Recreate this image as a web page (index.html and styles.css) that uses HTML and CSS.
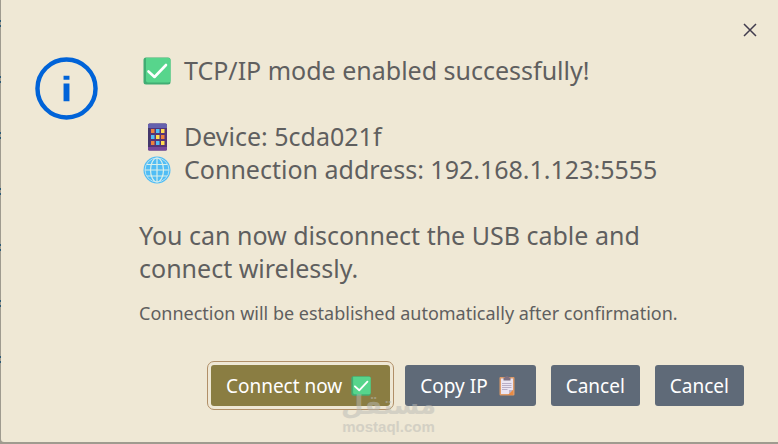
FILE: index.html
```html
<!DOCTYPE html>
<html lang="en">
<head>
<meta charset="utf-8">
<meta name="viewport" content="width=device-width, initial-scale=1">
<title>TCP/IP mode</title>
<link rel="stylesheet" href="styles.css">
</head>
<body>
<svg class="defs" aria-hidden="true">
  <symbol id="check" viewBox="0 0 28 28">
    <rect x="0.5" y="0.5" width="27" height="27" rx="2.5" fill="#41ad73"/>
    <path d="M3 1h22.500a2 2 0 0 1 2 2v20.500a2 2 0 0 1-2 2H5a2 2 0 0 1-2-2z" fill="#57d58c"/>
    <path d="M5.500 14.500l6 5.500L23 8" fill="none" stroke="#fff" stroke-width="2.600" stroke-linecap="round" stroke-linejoin="round"/>
  </symbol>
  <symbol id="phone" viewBox="0 0 28 28">
    <rect x="5" y="0.500" width="19" height="27" rx="1.500" fill="#543476"/>
    <path d="M5 5V2a1.500 1.500 0 0 1 1.500-1.500h16A1.500 1.500 0 0 1 24 2v3z" fill="#6561ae"/>
    <path d="M5 24h19v2a1.500 1.500 0 0 1-1.500 1.500h-16A1.500 1.500 0 0 1 5 26z" fill="#75479b"/>
    <path d="M5 5h2v19H5z" fill="#44376b"/>
    <path d="M8 6h3.500v4H8zM18 12h3.500v4H18zM8 18h3.500v4H8z" fill="#ed823c"/>
    <path d="M13 6h3.500v4H13zM8 12h3.500v4H8zM13 18h3.500v4H13z" fill="#50bdf5"/>
    <path d="M18 6h3.500v4H18zM13 12h3.500v4H13zM18 18h3.500v4H18z" fill="#ffdb51"/>
  </symbol>
  <symbol id="globe" viewBox="0 0 28 28">
    <circle cx="14" cy="14" r="13.500" fill="#50bdf5"/>
    <g fill="none" stroke="#d9efea" stroke-width="1.200">
      <ellipse cx="14" cy="14" rx="6.500" ry="12"/>
      <path d="M14 2v24M2 14h24M4 8.500h20M4 20h20"/>
    </g>
    <circle cx="14" cy="14" r="12" fill="none" stroke="#cfeaf0" stroke-width="0.800"/>
  </symbol>
  <symbol id="clipboard" viewBox="0 0 20 20">
    <rect x="2.500" y="1" width="15" height="18.500" rx="1" fill="#df9b68"/>
    <path d="M4 2.500h12v11L12 18H4z" fill="#ebe5f1"/>
    <path d="M12 18v-4h4z" fill="#bdb2c8"/>
    <path d="M16 14v5h-5z" fill="#e98b43"/>
    <path d="M6.500 1.500H8a2 1.500 0 0 1 4 0h1.500v3h-7z" fill="#7d7081"/>
    <path d="M5 7.500h9.500M5 9.500h9.500M5 11.500h9.500M5 13.500h5.500" stroke="#b9aec6" stroke-width="1"/>
  </symbol>
</svg>
<main class="dialog" role="dialog" aria-labelledby="title">
  <button class="close" type="button" aria-label="Close">
    <svg viewBox="0 0 14 14"><path d="M1 1l12 12M13 1L1 13" stroke="#413c4e" stroke-width="1.500"/></svg>
  </button>
  <div class="body">
    <svg class="info" viewBox="0 0 64 64" aria-hidden="true">
      <circle cx="32" cy="32" r="29.500" fill="none" stroke="#0063d8" stroke-width="4.500"/>
      <path d="M29 19h6v4h-6zM29 27h6v18h-6z" fill="#0063d8"/>
    </svg>
    <div class="message">
      <h1 class="line" id="title"><svg class="emoji"><use href="#check"/></svg>TCP/IP mode enabled successfully!</h1>
      <div class="group">
        <p class="line"><svg class="emoji"><use href="#phone"/></svg>Device: 5cda021f</p>
        <p class="line"><svg class="emoji"><use href="#globe"/></svg>Connection address: 192.168.1.123:5555</p>
      </div>
      <p class="text">You can now disconnect the USB cable and connect wirelessly.</p>
      <p class="note">Connection will be established automatically after confirmation.</p>
    </div>
  </div>
  <div class="actions">
    <button class="btn primary" type="button">Connect now <svg class="mini"><use href="#check"/></svg></button>
    <button class="btn with-icon" type="button">Copy IP <svg class="mini"><use href="#clipboard"/></svg></button>
    <button class="btn" type="button">Cancel</button>
    <button class="btn" type="button">Cancel</button>
  </div>
  <div class="watermark"><span class="mark-ar" lang="ar">مستقل</span><span class="mark-en">mostaql.com</span></div>
</main>
</body>
</html>
```
FILE: styles.css
```css
* { box-sizing: border-box; }
body {
  margin: 0;
  min-height: 100vh;
  display: flex;
  padding: 0 0 2px 1px;
  background:
    repeating-linear-gradient(transparent 0 20px, #2b5a76 20px 22px, transparent 22px 25px, #2b5a76 25px 27px, transparent 27px 56px) 0 0 / 1px 410px no-repeat,
    #9f9b8f;
  color: #5f5f5f;
  font-family: "Segoe UI", "Noto Sans", sans-serif;
}
.defs { position: absolute; width: 0; height: 0; }
.dialog {
  position: relative;
  flex: 1;
  display: flex;
  flex-direction: column;
  justify-content: space-between;
  gap: 24px;
  padding: 54px 34px 36px;
  background: #efe8d5;
  border-bottom-left-radius: 3px;
}
.close {
  position: absolute;
  top: 18px;
  right: 16px;
  padding: 5px;
  border: 0;
  background: none;
}
.close svg { display: block; width: 14px; height: 14px; }
.body { display: flex; gap: 41px; }
.info { flex: none; width: 63px; height: 63px; margin-top: 3px; }
.message { display: flex; flex-direction: column; gap: 33px; }
.line, .text { margin: 0; font-size: 25px; font-weight: 400; line-height: 33px; }
.line { display: flex; align-items: center; gap: 13px; padding-left: 4px; }
.emoji { flex: none; width: 28px; height: 28px; }
.text { max-width: 540px; }
.note { margin: -17px 0 0; font-size: 18px; line-height: 24px; }
.actions { display: flex; flex-wrap: wrap; justify-content: flex-end; gap: 15px; }
.btn {
  display: flex;
  align-items: center;
  gap: 9px;
  height: 41px;
  padding: 0 15px;
  border: 0;
  border-radius: 3px;
  background: #5f6a78;
  color: #fff;
  font: 19px/24px "Segoe UI", "Noto Sans", sans-serif;
}
.primary { padding-right: 19px; background: #8a7d42; outline: 1px solid #b18f68; outline-offset: 3px; }
.with-icon { padding-right: 19px; }
.mini { width: 20px; height: 20px; }
.watermark {
  position: absolute;
  left: 340px;
  bottom: 7px;
  display: flex;
  flex-direction: column;
  align-items: center;
  color: #b9b9b4;
  opacity: 0.5;
  font-weight: 700;
  pointer-events: none;
}
.mark-ar { font: 700 26px/28px "DejaVu Sans", sans-serif; }
.mark-en { font: 700 15px/16px "Liberation Sans", sans-serif; }
```
